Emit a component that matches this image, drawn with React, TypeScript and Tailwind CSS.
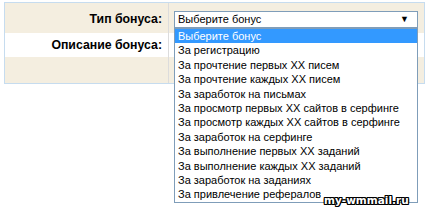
import React from 'react';

const options = [
  'Выберите бонус',
  'За регистрацию',
  'За прочтение первых XX писем',
  'За прочтение каждых XX писем',
  'За заработок на письмах',
  'За просмотр первых XX сайтов в серфинге',
  'За просмотр каждых XX сайтов в серфинге',
  'За заработок на серфинге',
  'За выполнение первых XX заданий',
  'За выполнение каждых XX заданий',
  'За заработок на заданиях',
  'За привлечение рефералов',
];

export default function App() {
  return (
    <div className="relative w-[427px] h-[210px] bg-white overflow-hidden" style={{ fontFamily: '"Liberation Sans", Arial, sans-serif' }}>
      <div className="ml-[4px] mt-[2px] w-[421px] border border-[#c6dcef] flex flex-col">
        <div className="flex h-[30px] bg-[#f4eee0]">
          <div className="w-[164px] border-r border-[#dcdcdc] flex items-center justify-end pr-[6px] pt-[2px] text-[12.3px] font-bold text-black">
            Тип бонуса:
          </div>
          <div className="flex-1" />
        </div>
        <div className="flex h-[24px] bg-white">
          <div className="w-[164px] border-r border-[#dcdcdc] flex items-center justify-end pr-[6px] text-[12.3px] font-bold text-black">
            Описание бонуса:
          </div>
          <div className="flex-1" />
        </div>
        <div className="flex h-[26px] bg-[#f4eee0]">
          <div className="w-[164px] border-r border-[#dcdcdc]" />
          <div className="flex-1" />
        </div>
      </div>

      {/* select box */}
      <div className="absolute left-[174px] top-[11px] w-[244px] h-[17px] border border-[#7f9db9] bg-white flex items-center pl-[3px] text-[11px] text-black whitespace-nowrap">
        <span className="flex-1">Выберите бонус</span>
        <span className="mr-[8px] text-[9px] leading-none">▼</span>
      </div>

      {/* open list */}
      <div className="absolute left-[174px] top-[28px] w-[244px] border border-[#7f9db9] bg-white flex flex-col text-[11px] text-black whitespace-nowrap">
        {options.map((o, i) => (
          <div
            key={i}
            className={
              i === 0
                ? 'h-[14.4px] leading-[14.4px] pl-[3px] bg-[#3399ff] text-white'
                : 'h-[14.4px] leading-[14.4px] pl-[3px]'
            }
          >
            {o}
          </div>
        ))}
      </div>

      <div
        className="absolute left-[324px] top-[193px] text-[10.5px] font-bold text-white"
        style={{
          fontFamily: '"DejaVu Sans", Verdana, sans-serif',
          textShadow: '1px 0 #000, -1px 0 #000, 0 1px #000, 0 -1px #000, 1px 1px #000, -1px -1px #000, 1px -1px #000, -1px 1px #000',
        }}
      >
        my-wmmail.ru
      </div>
    </div>
  );
}
